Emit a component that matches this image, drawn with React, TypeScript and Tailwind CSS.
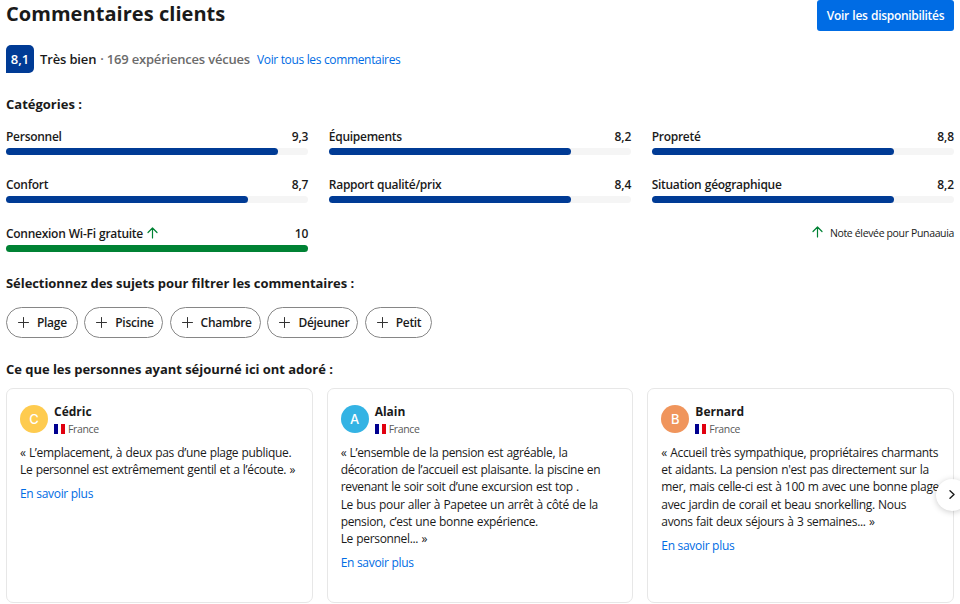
const categories = [
  { label: "Personnel", score: "9,3", fill: 90 },
  { label: "Équipements", score: "8,2", fill: 80 },
  { label: "Propreté", score: "8,8", fill: 80 },
  { label: "Confort", score: "8,7", fill: 80 },
  { label: "Rapport qualité/prix", score: "8,4", fill: 80 },
  { label: "Situation géographique", score: "8,2", fill: 80 },
  { label: "Connexion Wi-Fi gratuite", score: "10", fill: 100, high: true },
];

const topics = [
  { label: "Plage", width: "w-[72px]" },
  { label: "Piscine", width: "w-[79px]" },
  { label: "Chambre", width: "w-[91.5px]" },
  { label: "Déjeuner", width: "w-[91px]" },
  { label: "Petit", width: "w-[67px]" },
];

const reviews = [
  {
    name: "Cédric",
    color: "bg-[#fecb4f]",
    lines: ["« L’emplacement, à deux pas d’une plage publique.", "Le personnel est extrêmement gentil et a l’écoute. »"],
  },
  {
    name: "Alain",
    color: "bg-[#34b3e4]",
    lines: [
      "« L’ensemble de la pension est agréable, la",
      "décoration de l’accueil est plaisante. la piscine en",
      "revenant le soir soit d’une excursion est top .",
      "Le bus pour aller à Papetee un arrêt à côté de la",
      "pension, c’est une bonne expérience.",
      "Le personnel... »",
    ],
  },
  {
    name: "Bernard",
    color: "bg-[#f0955c]",
    lines: [
      "« Accueil très sympathique, propriétaires charmants",
      "et aidants. La pension n'est pas directement sur la",
      "mer, mais celle-ci est à 100 m avec une bonne plage",
      "avec jardin de corail et beau snorkelling. Nous",
      "avons fait deux séjours à 3 semaines... »",
    ],
  },
];

function ArrowUp() {
  return (
    <svg className="w-[11px] h-[12px] shrink-0" fill="none" stroke="#008234" viewBox="0 0 11 12">
      <path strokeLinecap="round" strokeLinejoin="round" strokeWidth={1.2} d="M5.5 11V1M1 5.5l4.5-4.5L10 5.5" />
    </svg>
  );
}

function Flag() {
  return (
    <svg className="w-[11px] h-[10px]" viewBox="0 0 11 10">
      <path fill="#fff" d="M0 0h11v10H0z" />
      <path fill="#00008f" d="M0 0h4v10H0z" />
      <path fill="#e1000f" d="M7 0h4v10H7z" />
    </svg>
  );
}

export default function App() {
  return (
    <div className="w-[960px] h-[604px] overflow-hidden bg-white px-[6px] text-[#1a1a1a] whitespace-nowrap font-['Open_Sans',sans-serif]">
      <header className="h-[31px] flex items-start justify-between">
        <h2 className="text-[20px] leading-[27px] font-bold tracking-[0.05px]">Commentaires clients</h2>
        <button className="w-[137px] h-[31px] rounded-[3px] bg-[#006ce4] text-white text-[12px] font-semibold tracking-[-0.3px] [word-spacing:0.6px]">
          Voir les disponibilités
        </button>
      </header>

      <div className="mt-[14px] h-[28px] flex items-center">
        <span className="w-[28px] h-[28px] pt-px rounded-[5px] rounded-bl-none bg-[#003b95] text-white text-[13px] font-semibold flex items-center justify-center">
          8,1
        </span>
        <span className="mt-[2px] ml-[6px] text-[13px] font-semibold tracking-[-0.15px]">Très bien</span>
        <span className="mt-[2px] ml-[4px] text-[13px] font-semibold tracking-[-0.2px] text-[#6b6b6b]">· 169 expériences vécues</span>
        <a className="mt-[2px] ml-[7px] text-[12px] tracking-[-0.34px] text-[#006ce4]">Voir tous les commentaires</a>
      </div>

      <h3 className="mt-[21px] h-[20px] text-[13px] leading-[20px] font-bold">Catégories :</h3>

      <div className="mt-[13px] grid grid-cols-3 gap-x-[20.5px]">
        {categories.map((c) => (
          <div key={c.label} className="h-[48.3px]">
            <div className="h-[21px] pt-px flex justify-between text-[12px] leading-[17px] font-semibold">
              <span className="flex items-center h-[17px] gap-[4px] tracking-[-0.28px] [word-spacing:0.5px]">
                {c.label}
                {c.high && <ArrowUp />}
              </span>
              <span className="tracking-[-0.1px]">{c.score}</span>
            </div>
            <div className="h-[7px] rounded-full bg-[#f5f5f5]">
              <div
                className={c.high ? "h-full rounded-full bg-[#008234]" : "h-full rounded-full bg-[#003b95]"}
                style={{ width: `${c.fill}%` }}
              />
            </div>
          </div>
        ))}
        <div className="col-start-3 mt-[2px] h-[17px] flex items-center justify-end text-[10.5px] tracking-[-0.35px]">
          <span className="mr-[7px] -mt-[5px]">
            <ArrowUp />
          </span>
          Note élevée pour Punaauia
        </div>
      </div>

      <h3 className="mt-px h-[20px] text-[13px] leading-[20px] font-bold tracking-[-0.06px]">Sélectionnez des sujets pour filtrer les commentaires :</h3>
      <div className="mt-[14px] flex gap-[6.3px]">
        {topics.map((t) => (
          <button
            key={t.label}
            className={`${t.width} h-[31px] shrink-0 rounded-full border border-[#868686] pl-[11px] pt-px flex items-center text-[12px] font-semibold tracking-[-0.3px]`}
          >
            <svg className="w-[11px] h-[11px] mr-[8px] -mt-px shrink-0" stroke="#333" viewBox="0 0 11 11">
              <path strokeLinecap="round" d="M5.5 .5v10M.5 5.5h10" />
            </svg>
            {t.label}
          </button>
        ))}
      </div>

      <h3 className="mt-[21px] h-[20px] text-[13px] leading-[20px] font-bold tracking-[-0.04px]">Ce que les personnes ayant séjourné ici ont adoré :</h3>
      <div className="relative mt-[9px] grid grid-cols-3 gap-[14px]">
        {reviews.map((r) => (
          <article key={r.name} className="h-[215px] rounded-[7px] border border-[#e7e7e7] pl-[13px] pt-[14px]">
            <div className="flex">
              <span className={`${r.color} mt-[2px] w-[28px] h-[28px] pt-px rounded-full text-white font-['Inter',sans-serif] text-[13px] font-medium flex items-center justify-center`}>
                {r.name[0]}
              </span>
              <div className="ml-[6px]">
                <div className="h-[17px] leading-[17px] text-[12px] font-bold">{r.name}</div>
                <div className="mt-[2px] h-[15px] flex items-center gap-[3px] text-[10.5px] tracking-[-0.35px] text-[#595959]">
                  <Flag />
                  <span className="mt-px">France</span>
                </div>
              </div>
            </div>
            <div className="mt-[7px] text-[12px] leading-[17.25px] tracking-[-0.33px] [word-spacing:0.5px]">
              {r.lines.map((line) => (
                <p key={line}>{line}</p>
              ))}
            </div>
            <a className="mt-[7px] block text-[12px] leading-[17px] tracking-[-0.3px] text-[#006ce4]">En savoir plus</a>
          </article>
        ))}
        <button className="absolute left-[930px] top-[91px] w-[32px] h-[32px] rounded-full bg-white shadow-[0_1px_6px_rgba(0,0,0,0.2)] flex items-center justify-center">
          <svg className="w-[6px] h-[9px]" fill="none" stroke="#1a1a1a" viewBox="0 0 6 9">
            <path strokeLinecap="round" strokeLinejoin="round" strokeWidth={1.4} d="M1 .8l4 3.7-4 3.7" />
          </svg>
        </button>
      </div>
    </div>
  );
}
